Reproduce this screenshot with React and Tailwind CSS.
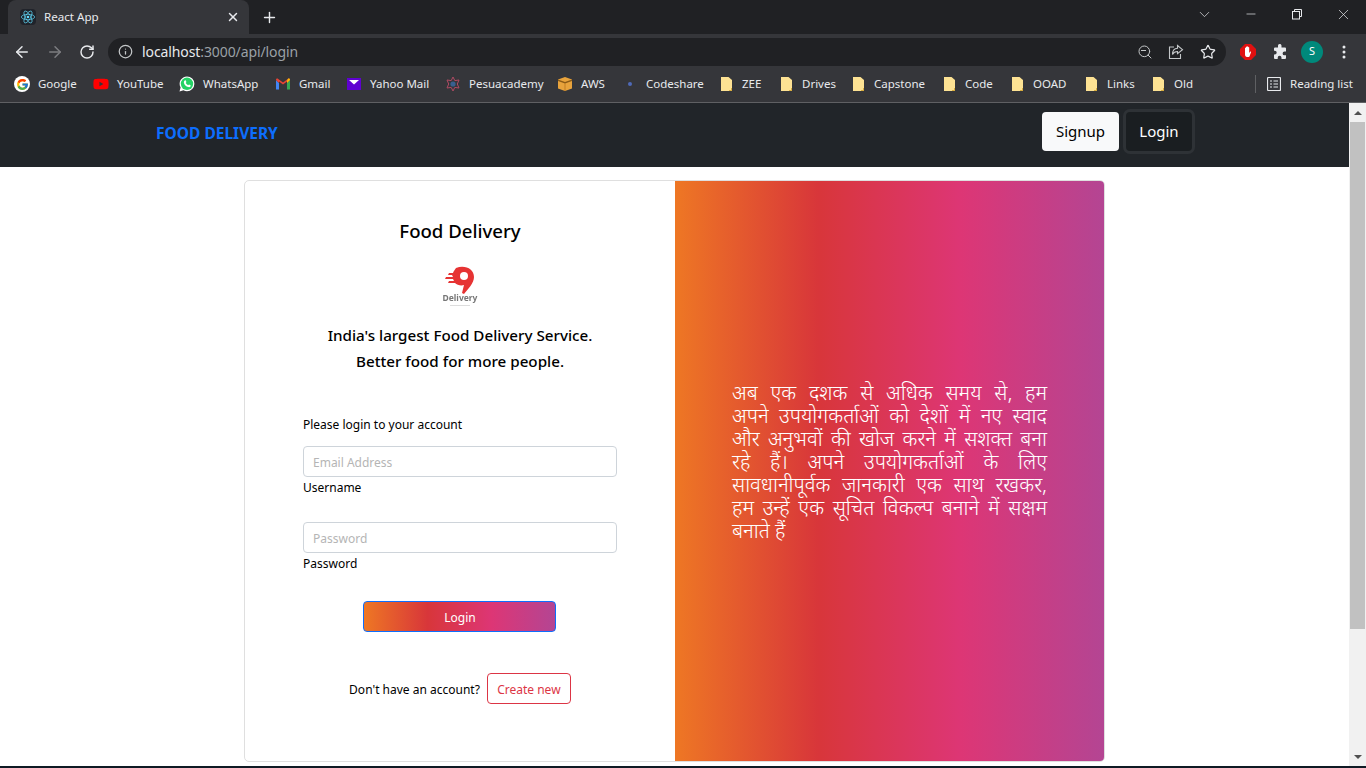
import React from "react";
import { ArrowLeft, ArrowRight, RotateCw, Info, Star, X, Plus, ChevronDown, Minus, Search } from "lucide-react";
import { FcGoogle } from "react-icons/fc";
import { FaYoutube } from "react-icons/fa";

const Folder = () => (
  <svg width="13" height="16" viewBox="0 0 13 16" className="shrink-0 mr-px">
    <path d="M1 1h7.500l3.500 3v11H1z" fill="#fde293" />
    <path d="M11 12h1v3H9v-1h2z" fill="#d9ae3f" />
  </svg>
);
const Google = () => (
  <span className="w-4 h-4 rounded-full bg-white flex items-center justify-center shrink-0"><FcGoogle size={13} /></span>
);
const Whats = () => (
  <svg width="16" height="16" viewBox="0 0 16 16" className="shrink-0">
    <path d="M8 .4a7.400 7.400 0 0 1 0 14.800c-1.300 0-2.500-.3-3.500-.9L.5 15.500l1.100-4A7.400 7.400 0 0 1 8 .4z" fill="#fff" />
    <circle cx="8" cy="7.800" r="6.200" fill="#25d366" />
    <path d="M5.700 4.400c.5-.4.900-.3 1.100.2l.5 1.200c.1.300 0 .5-.5 1.100.5 1 1.300 1.800 2.400 2.300.5-.6.700-.8 1-.6l1.200.6c.4.200.5.500.2 1.100-.4.800-1.400 1.100-2.400.8-2.200-.6-3.900-2.300-4.300-4.300-.1-1 .1-1.900.8-2.400z" fill="#fff" />
  </svg>
);
const Gmail = () => (
  <svg width="16" height="16" viewBox="0 0 16 16" className="shrink-0">
    <path d="M1 4v9.500h3V7z" fill="#4285f4" />
    <path d="M15 4v9.500h-3V7z" fill="#34a853" />
    <path d="M1 4c0-1.300 1.300-1.800 2.200-1.100L8 6.500l4.800-3.600c.9-.7 2.200-.2 2.200 1.100L12 7V5.500L8 8.500 4 5.500V7z" fill="#ea4335" />
    <path d="M12.800 2.900c.9-.7 2.200-.2 2.200 1.100l-3 3V5z" fill="#fbbc04" />
  </svg>
);
const Yahoo = () => (
  <svg width="16" height="16" viewBox="0 0 16 16" className="shrink-0">
    <rect x="1" y="2" width="14" height="12" fill="#5f01d1" />
    <path d="M3 4h10L8 8.500z" fill="#fff" />
  </svg>
);
const Pesu = () => (
  <svg width="16" height="16" viewBox="0 0 16 16" className="shrink-0" fill="none">
    <path d="M8 1l1.800 3.600L14 4l-1.700 4L14 12l-4.200-.6L8 15l-1.800-3.600L2 12l1.700-4L2 4l4.200.6z" stroke="#b04a63" strokeWidth="1" />
    <circle cx="8" cy="8" r="2.600" fill="#38608f" />
  </svg>
);
const Aws = () => (
  <svg width="16" height="16" viewBox="0 0 16 16" className="shrink-0">
    <path d="M1 3.500L8 1l7 2.500v9L8 15l-7-2.500z" fill="#e8a33c" />
    <path d="M1 3.500L8 6l7-2.500V5L8 7.500 1 5z" fill="#8a5a16" />
    <path d="M7.500 7h1v8h-1z" fill="#c17f22" />
  </svg>
);
const Dot = () => (
  <span className="w-4 h-4 flex items-center justify-center shrink-0"><span className="w-1 h-1 rounded-full bg-[#4f6ab8]" /></span>
);

const marks = [
  { t: "Google", w: "w-[79px]", i: <Google /> },
  { t: "YouTube", w: "w-[86px]", i: <FaYoutube size={16} color="#f00" className="shrink-0" /> },
  { t: "WhatsApp", w: "w-[96px]", i: <Whats /> },
  { t: "Gmail", w: "w-[71px]", i: <Gmail /> },
  { t: "Yahoo Mail", w: "w-[99px]", i: <Yahoo /> },
  { t: "Pesuacademy", w: "w-[112px]", i: <Pesu /> },
  { t: "AWS", w: "w-[65px]", i: <Aws /> },
  { t: "Codeshare", w: "w-[98px]", i: <Dot /> },
  { t: "ZEE", w: "w-[60px]", f: 1 },
  { t: "Drives", w: "w-[72px]", f: 1 },
  { t: "Capstone", w: "w-[91px]", f: 1 },
  { t: "Code", w: "w-[68px]", f: 1 },
  { t: "OOAD", w: "w-[74px]", f: 1 },
  { t: "Links", w: "w-[67px]", f: 1 },
  { t: "Old", w: "w-[72px]", f: 1 },
];

const hindi = [
  "अब एक दशक से अधिक समय से, हम",
  "अपने उपयोगकर्ताओं को देशों में नए स्वाद",
  "और अनुभवों की खोज करने में सशक्त बना",
  "रहे हैं। अपने उपयोगकर्ताओं के लिए",
  "सावधानीपूर्वक जानकारी एक साथ रखकर,",
  "हम उन्हें एक सूचित विकल्प बनाने में सक्षम",
];

const grad = "bg-[linear-gradient(to_right,#ee7724,#d8363a,#dd3675,#b44593)]";

export default function App() {
  return (
    <div className="h-screen overflow-hidden flex flex-col bg-white font-['Noto_Sans','Open_Sans',sans-serif] text-black">
      {/* tab strip */}
      <div className="h-[34px] shrink-0 bg-[#202124] flex items-end text-[#e8eaed]">
        <div className="ml-[8px] w-[241px] h-[34px] bg-[#35363a] rounded-t-lg flex items-center pl-[12px] pr-[9px]">
          <span className="w-4 h-4 rounded-sm bg-[#20232a] flex items-center justify-center shrink-0">
            <svg width="16" height="16" viewBox="-12 -12 24 24" fill="none" stroke="#61dafb" strokeWidth="1">
              <circle r="2" fill="#61dafb" stroke="none" />
              <ellipse rx="10" ry="4" />
              <ellipse rx="10" ry="4" transform="rotate(60)" />
              <ellipse rx="10" ry="4" transform="rotate(120)" />
            </svg>
          </span>
          <span className="ml-[8px] text-[11.6px] flex-1">React App</span>
          <X size={14} strokeWidth={2.500} />
        </div>
        <div className="ml-[12px] h-[34px] flex items-center"><Plus size={17} strokeWidth={2} /></div>
        <div className="ml-auto self-start h-[28px] flex items-center pr-[14px]">
          <ChevronDown size={17} strokeWidth={1} className="mr-[31px]" />
          <Minus size={14} strokeWidth={1.200} className="mr-[33px]" />
          <svg width="12" height="12" viewBox="0 0 12 12" fill="none" stroke="#e8eaed" className="mr-[32px]">
            <rect x="1.500" y="3.500" width="7" height="7.500" />
            <path d="M3.500 3.500V1.500h7v7H8.500" />
          </svg>
          <X size={17} strokeWidth={1} />
        </div>
      </div>

      {/* toolbar */}
      <div className="h-[35px] shrink-0 bg-[#35363a] flex items-center text-[#e8eaed]">
        <div className="w-[108px] flex items-center pl-[13px] gap-[15px]">
          <ArrowLeft size={18} strokeWidth={2} />
          <ArrowRight size={18} strokeWidth={2} className="text-[#7c7d80]" />
          <RotateCw size={16} strokeWidth={2.200} />
        </div>
        <div className="w-[1118px] h-[28px] rounded-full bg-[#202124] flex items-center pl-[10px] pr-[10px]">
          <Info size={15} strokeWidth={2} className="text-[#c4c7c9]" />
          <span className="ml-[9px] text-[14px] tracking-[-0.1px]">localhost<span className="text-[#9aa0a6]">:3000/api/login</span></span>
          <div className="ml-auto flex items-center text-[#c4c7c9]">
            <span className="relative w-4 h-4">
              <Search size={16} strokeWidth={1.500} />
              <span className="absolute left-[4px] top-[6px] w-[5px] h-px bg-[#c4c7c9]" />
            </span>
            <svg width="16" height="16" viewBox="0 0 16 16" fill="none" stroke="#c4c7c9" strokeWidth="1.100" className="ml-[15px]">
              <path d="M6 3H1.500v11.500h11V10" />
              <path d="M9.500 1.500l5 4.200-5 4V7.500c-2.500 0-4 1-5 3 0-3.500 1.800-6 5-6.200z" />
            </svg>
            <Star size={16} strokeWidth={1.800} className="ml-[16px] text-[#e8eaed]" />
          </div>
        </div>
        <div className="flex items-center ml-[14px]">
          <svg width="16" height="16" viewBox="0 0 16 16" className="shrink-0">
            <path d="M5 0h6l5 5v6l-5 5H5l-5-5V5z" fill="#e01010" />
            <path d="M5 6V4c0-.7 1-.7 1 0V3c0-.7 1.100-.7 1.100 0v-.3c0-.7 1.100-.7 1.100 0V3.500c0-.7 1-.7 1 0V9l.9-1.300c.5-.6 1.200 0 .9.600L9.500 12.500c-.2.300-.5.500-.8.500H7c-1.200 0-2-1-2-2.200z" fill="#fff" />
          </svg>
          <svg width="16" height="16" viewBox="0 0 16 16" className="ml-[16px] shrink-0">
            <path d="M6 1.500a1.800 1.800 0 0 1 3.500 0V3.500H13a1 1 0 0 1 1 1v3h-1.500a1.900 1.900 0 0 0 0 3.800H14V14a1 1 0 0 1-1 1H9.500v-1.300a1.900 1.900 0 0 0-3.800 0V15H3a1 1 0 0 1-1-1v-3.500h.8a1.900 1.900 0 0 0 0-3.800H2V4.500a1 1 0 0 1 1-1h3z" fill="#e8eaed" />
          </svg>
          <span className="ml-[13px] w-[22px] h-[22px] shrink-0 rounded-full bg-[#00897b] text-white text-[11px] flex items-center justify-center">S</span>
          <svg width="4" height="14" viewBox="0 0 4 14" fill="#e8eaed" className="ml-[19px]">
            <circle cx="2" cy="2" r="1.500" /><circle cx="2" cy="7" r="1.500" /><circle cx="2" cy="12" r="1.500" />
          </svg>
        </div>
      </div>

      {/* bookmarks */}
      <div className="h-[34px] shrink-0 bg-[#35363a] border-b border-[#5f6063] flex items-center pb-[3px] pl-[14px] text-[11.5px] text-[#e8eaed]">
        {marks.map((m) => (
          <div key={m.t} className={`${m.w} flex items-center gap-[8px] whitespace-nowrap`}>
            {m.f ? <Folder /> : m.i}
            <span>{m.t}</span>
          </div>
        ))}
        <div className="ml-[31px] w-px h-[18px] bg-[#5f6063]" />
        <svg width="14" height="14" viewBox="0 0 14 14" fill="none" stroke="#e8eaed" className="ml-[11px]">
          <rect x="0.500" y="0.500" width="13" height="13" rx="1" strokeWidth="1.200" />
          <path d="M3 4h2M6.500 4H11M3 7h2M6.500 7H11M3 10h2M6.500 10H11" />
        </svg>
        <span className="ml-[9px] whitespace-nowrap">Reading list</span>
      </div>

      {/* page + scrollbar */}
      <div className="flex-1 min-h-0 flex">
        <div className="flex-1 min-w-0 flex flex-col">
          <nav className="h-[64px] shrink-0 bg-[#212529] flex items-center pl-[156px] pr-[157px]">
            <span className="text-[#0d6efd] font-bold text-[15.5px] leading-[20px] mb-[5px]">FOOD DELIVERY</span>
            <div className="ml-auto flex items-center mb-[7px]">
              <button className="w-[77px] h-[39px] rounded-[4px] bg-[#f8f9fa] text-[#000] text-[15px]">Signup</button>
              <button className="ml-[7px] w-[66px] h-[39px] rounded-[4px] bg-[#1a1e21] text-white text-[15px] ring-[3px] ring-[#2e3236]">Login</button>
            </div>
          </nav>
          <div className="flex-1 min-h-0 pt-[13px] flex justify-center">
            <div className="w-[861px] h-[582px] shrink-0 border border-[#dfdfdf] rounded-[5px] flex overflow-hidden">
              <div className="w-[430px] shrink-0 flex flex-col items-center pt-[35px]">
                <h4 className="text-[18.6px] leading-[30px] font-medium">Food Delivery</h4>
                <svg width="40" height="44" viewBox="0 0 40 44" className="mt-[19px] blur-[0.4px]">
                  <path d="M16 3c9-3.500 18 1 18 9 0 6-6 12-10 17l-2-1 2-8c-3 1-7 0-9-2H8l1-2h5l-1-2H5l1-2h7l-1-2H8l1-2h4c.5-1.500 1.500-3 3-5z" fill="#e63333" />
                  <circle cx="24" cy="11" r="4" fill="#fff" />
                  <text x="20" y="36" textAnchor="middle" fontSize="8.500" fontWeight="700" fill="#777" fontFamily="Noto Sans">Delivery</text>
                  <rect x="10" y="40" width="20" height="1" fill="#ddd" />
                </svg>
                <p className="mt-[13px] text-[15.2px] leading-[26px] font-medium text-center">India's largest Food Delivery Service.<br />Better food for more people.</p>
                <div className="w-[314px] mt-[41px] text-[12px]">
                  <p className="leading-[20px]">Please login to your account</p>
                  <input readOnly placeholder="Email Address" className="mt-[11px] block w-full h-[31px] border border-[#ced4da] rounded-[4px] px-[9px] pt-[2px] text-[12px] placeholder:text-[#b5b5b5] outline-none" />
                  <label className="block leading-[20px] mt-px">Username</label>
                  <input readOnly placeholder="Password" className="mt-[24px] block w-full h-[31px] border border-[#ced4da] rounded-[4px] px-[9px] pt-[2px] text-[12px] placeholder:text-[#b5b5b5] outline-none" />
                  <label className="block leading-[20px] mt-px">Password</label>
                </div>
                <button className={`mt-[27px] ml-[-2px] w-[193px] h-[31px] rounded-[4px] border border-[#0d6efd] pt-[2px] pl-[2px] ${grad} text-white text-[12px]`}>Login</button>
                <div className="mt-[41px] flex items-center text-[12px]">
                  <span className="pt-[2px]">Don't have an account?</span>
                  <button className="ml-[7px] w-[84px] h-[31px] pt-[2px] border border-[#dc3545] rounded-[4px] text-[#dc3545]">Create new</button>
                </div>
              </div>
              <div className={`flex-1 ${grad} flex items-center px-[57px] pb-[13px]`}>
                <p className="w-full text-white text-[20.5px] leading-[23px] font-light font-['Noto_Sans_Devanagari','Noto_Sans','Lohit_Devanagari',serif]">
                  {hindi.map((l) => (
                    <span key={l} className="block text-justify [text-align-last:justify]">{l}</span>
                  ))}
                  <span className="block">बनाते हैं</span>
                </p>
              </div>
            </div>
          </div>
        </div>
        {/* scrollbar */}
        <div className="w-[17px] shrink-0 bg-[#f1f1f1] flex flex-col items-center">
          <div className="h-[19px] flex items-center"><div className="w-0 h-0 border-l-[4px] border-r-[4px] border-b-[4px] border-l-transparent border-r-transparent border-b-[#505050]" /></div>
          <div className="w-[15px] h-[507px] bg-[#c1c1c1] shrink-0" />
          <div className="mt-auto h-[19px] flex items-center"><div className="w-0 h-0 border-l-[4px] border-r-[4px] border-t-[4px] border-l-transparent border-r-transparent border-t-[#505050]" /></div>
        </div>
      </div>
      <div className="h-[2px] shrink-0 bg-[#0f1a24]" />
    </div>
  );
}
